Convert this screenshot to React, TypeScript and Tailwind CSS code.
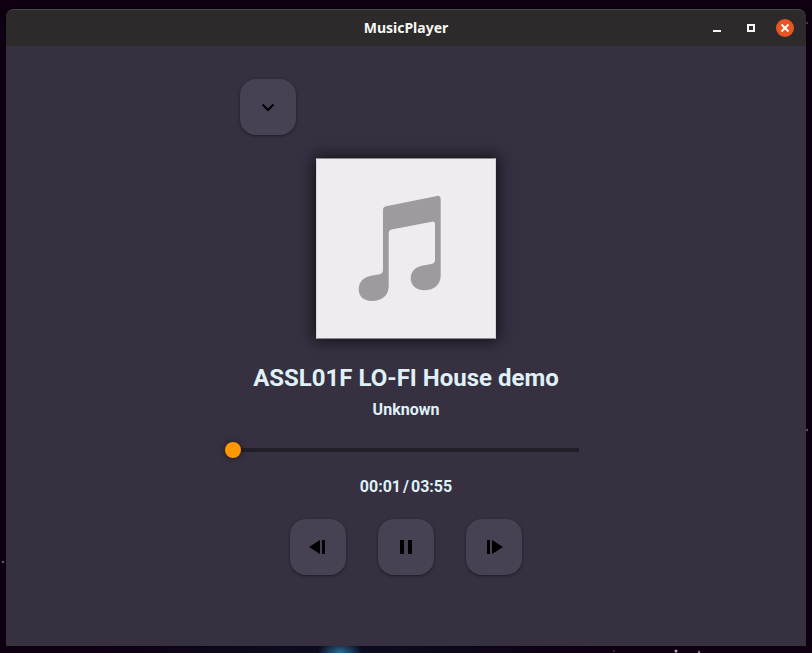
import React, { useState } from "react";

type IconButtonProps = { label: string; children: React.ReactNode };

function IconButton({ label, children }: IconButtonProps) {
  return (
    <button
      type="button"
      aria-label={label}
      className="flex size-14 items-center justify-center rounded-2xl bg-[#474153] text-black shadow-[0_1px_3px_rgba(0,0,0,0.45)]"
    >
      {children}
    </button>
  );
}

function Stars() {
  return (
    <svg className="absolute inset-0 size-full" aria-hidden="true">
      <g fill="#b9aeb9">
        <circle cx="3" cy="562" r="1.2" opacity="0.6" />
        <circle cx="807" cy="430" r="1.2" opacity="0.6" />
        <circle cx="807" cy="23" r="1.2" opacity="0.4" />
        <circle cx="676" cy="651" r="1.5" />
        <circle cx="699" cy="652" r="1.2" opacity="0.7" />
        <circle cx="614" cy="651" r="1" opacity="0.3" />
      </g>
    </svg>
  );
}

function TitleBar() {
  return (
    <header className="grid h-[37px] grid-cols-[1fr_auto_1fr] items-center rounded-t-lg border-t border-[#484747] bg-[#2c2a2a] px-3">
      <h1 className="col-start-2 font-['Noto_Sans',sans-serif] text-sm font-bold text-[#f7f7f5]">
        MusicPlayer
      </h1>
      <div className="flex items-center justify-end gap-4 text-[#f7f7f5]">
        <button type="button" aria-label="Minimize" className="flex size-[18px] items-center justify-center">
          <svg width="18" height="18" aria-hidden="true">
            <rect x="5" y="11" width="8" height="2" fill="currentColor" />
          </svg>
        </button>
        <button type="button" aria-label="Maximize" className="flex size-[18px] items-center justify-center">
          <svg width="18" height="18" aria-hidden="true">
            <rect x="6" y="6" width="6" height="6" fill="none" stroke="currentColor" strokeWidth="2" />
          </svg>
        </button>
        <button
          type="button"
          aria-label="Close"
          className="flex size-[18px] items-center justify-center rounded-full bg-[#e95420]"
        >
          <svg width="18" height="18" aria-hidden="true">
            <path d="M5.5 5.5l7 7M12.5 5.5l-7 7" stroke="currentColor" strokeWidth="2" />
          </svg>
        </button>
      </div>
    </header>
  );
}

function Cover() {
  return (
    <div className="mt-[23px] h-[181px] w-[180px] self-center border border-x-[#d8d5d9] border-y-[#8d8990] bg-[#efebef] shadow-[0_0_14px_2px_rgba(0,0,0,0.65)]">
      <svg viewBox="1 1 178 178" className="size-full" role="img" aria-label="Album cover">
        <path
          fill="#9e9b9e"
          d="M67 51.5Q67 48.5 70 47.8L121 37.4Q124.7 37 124.7 41V117C124.7 126 118.5 131.7 108 131.7C100 131.7 94.7 126.500 94.700 120C94.700 113 99.500 108.300 107 107L115.500 105.400Q119 104.700 119 101.500V66Q119 62.600 116 63.200L75.500 71Q72.700 71.700 72.700 74.500V127.500C72.700 137 66 142.400 55.500 142.400C47.500 142.400 42.700 137.500 42.700 130.700C42.700 123.500 47.500 118.500 55 117.200L63.500 115.800Q67 115 67 111.500Z"
        />
      </svg>
    </div>
  );
}

export default function App() {
  const [position, setPosition] = useState(0);

  return (
    <div className="relative flex min-h-screen flex-col bg-[#100012] bg-[radial-gradient(ellipse_22px_22px_at_340px_100%,#2a6d98,transparent),radial-gradient(ellipse_280px_40px_at_340px_100%,#0e1024,transparent)] px-1.5 pt-[9px] pb-[7px]">
      <Stars />
      <div className="relative flex grow flex-col rounded-t-lg shadow-[0_0_6px_rgba(0,0,0,0.6)]">
        <TitleBar />
        <main className="flex grow flex-col items-center bg-[#363041] px-4 pt-[33px] pb-16 font-['Roboto',sans-serif] text-[#dff0f6]">
          <div className="flex w-full max-w-[332px] flex-col">
            <IconButton label="Show playlist">
              <svg width="24" height="24" viewBox="0 0 24 24" fill="none" aria-hidden="true">
                <path d="M6.500 9.500L12 15L17.500 9.500" stroke="currentColor" strokeWidth="2" />
              </svg>
            </IconButton>
            <Cover />
          </div>
          <h2 className="mt-[23px] text-2xl font-bold">ASSL01F LO-FI House demo</h2>
          <p className="mt-1 text-base font-bold">Unknown</p>
          <input
            type="range"
            aria-label="Playback position"
            min={0}
            max={235}
            value={position}
            onChange={(e) => setPosition(Number(e.target.value))}
            className="mt-5 h-4 w-full max-w-[362px] appearance-none bg-transparent bg-[linear-gradient(#231f2a,#231f2a)] bg-[length:calc(100%-16px)_4px] bg-center bg-no-repeat [&::-webkit-slider-thumb]:size-4 [&::-webkit-slider-thumb]:appearance-none [&::-webkit-slider-thumb]:rounded-full [&::-webkit-slider-thumb]:bg-[#ff9800] [&::-webkit-slider-thumb]:shadow-[0_0_6px_rgba(0,0,0,0.5)]"
          />
          <div className="mt-[17px] flex gap-0.5 text-base font-bold">
            <span>00:01</span>
            <span>/</span>
            <span>03:55</span>
          </div>
          <div className="mt-5 flex gap-8">
            <IconButton label="Previous">
              <svg width="24" height="24" viewBox="0 0 24 24" fill="currentColor" aria-hidden="true">
                <path d="M3 12L14 5V19ZM16 5H19V19H16Z" />
              </svg>
            </IconButton>
            <IconButton label="Pause">
              <svg width="24" height="24" viewBox="0 0 24 24" fill="currentColor" aria-hidden="true">
                <path d="M6 5H10V19H6ZM14 5H18V19H14Z" />
              </svg>
            </IconButton>
            <IconButton label="Next">
              <svg width="24" height="24" viewBox="0 0 24 24" fill="currentColor" aria-hidden="true">
                <path d="M5 5H8V19H5ZM10 5V19L21 12Z" />
              </svg>
            </IconButton>
          </div>
        </main>
      </div>
    </div>
  );
}
